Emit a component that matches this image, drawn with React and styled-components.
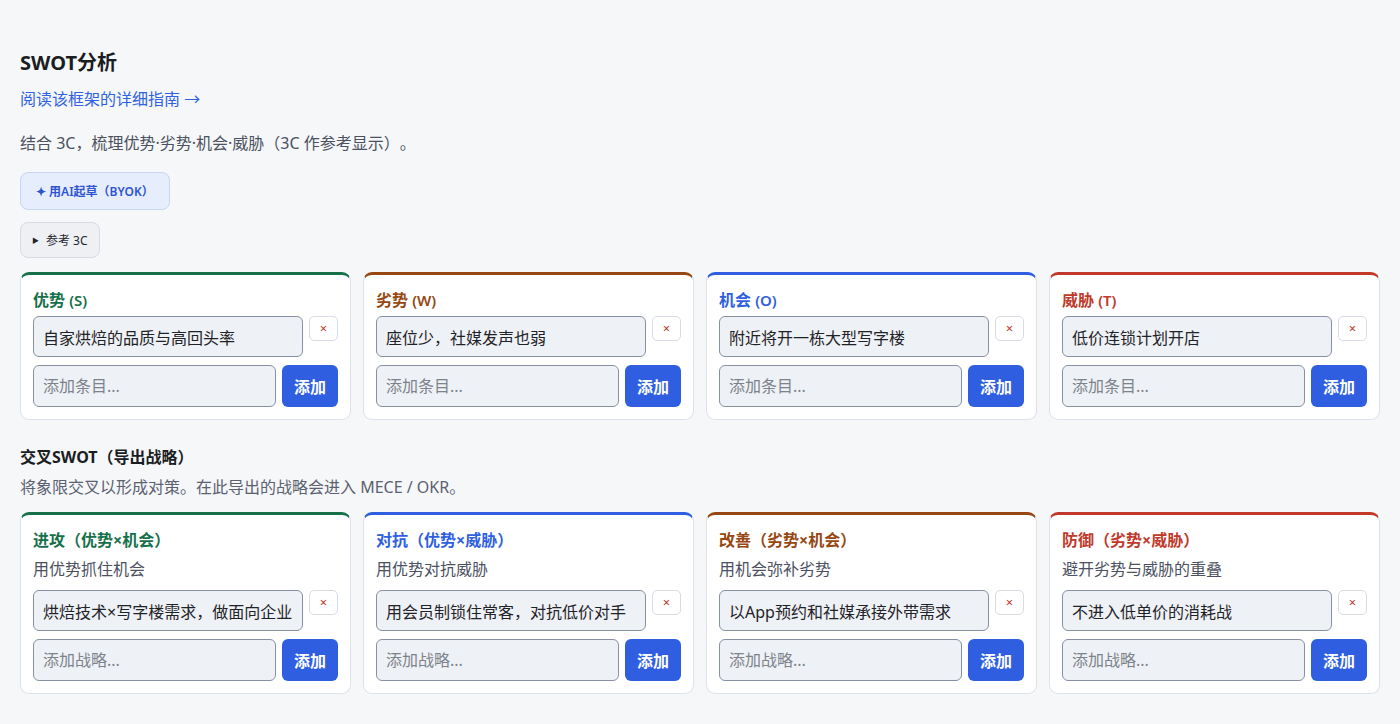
import React from "react";
import styled, { createGlobalStyle } from "styled-components";

const GlobalStyle = createGlobalStyle`
  body {
    margin: 0;
    background: #f6f7f9;
    font-family: "Noto Sans", "Noto Sans CJK SC", sans-serif;
    color: #1f2328;
    text-spacing-trim: space-all;
  }
  * {
    box-sizing: border-box;
  }
`;

const Page = styled.div`
  padding: 49px 20px 30px;
`;

const Title = styled.h2`
  margin: 0;
  font-size: 20px;
  line-height: 28px;
  font-weight: 700;
  color: #1a1d21;
`;

const GuideLink = styled.a`
  display: block;
  margin-top: 11px;
  font-size: 16px;
  line-height: 22px;
  color: #2f62e3;
  text-decoration: none;
`;

const Lead = styled.p`
  margin: 22px 0 0;
  font-size: 16px;
  line-height: 22px;
  color: #4b5160;
`;

const AiButton = styled.button`
  display: block;
  margin-top: 18px;
  height: 38px;
  padding: 0 15px;
  border: 1px solid #c9d5f2;
  border-radius: 8px;
  background: #e6edfd;
  color: #2f54d2;
  font-family: inherit;
  font-size: 12px;
  font-weight: 600;
`;

const RefButton = styled.button`
  display: block;
  margin-top: 12px;
  height: 36px;
  padding: 0 11px;
  border: 1px solid #d6dae2;
  border-radius: 8px;
  background: #eef0f4;
  color: #22262c;
  font-family: inherit;
  font-size: 12px;

  span {
    font-size: 7px;
    margin-right: 7px;
    vertical-align: 2px;
  }
`;

const Grid = styled.div`
  display: grid;
  grid-template-columns: repeat(4, minmax(0, 1fr));
  gap: 12px;
  margin-top: ${(p) => p.$top || 0}px;
`;

const Card = styled.div`
  background: #fff;
  border: 1px solid #dde1e8;
  border-top: 3px solid ${(p) => p.$color};
  border-radius: 9px;
  padding: 14px 12px 12px;
`;

const CardTitle = styled.div`
  font-size: 16px;
  line-height: 22px;
  font-weight: 700;
  color: ${(p) => p.$color};
  margin-bottom: 5px;

  small {
    font-size: 15px;
    font-weight: 600;
  }
`;

const CardHint = styled.div`
  font-size: 16px;
  line-height: 20px;
  color: #4b5160;
  margin: 8px 0 11px;
`;

const Row = styled.div`
  display: flex;
  align-items: flex-start;
  gap: 6px;
  margin-bottom: 8px;

  &:last-child {
    margin-bottom: 0;
  }
`;

const Field = styled.input`
  flex: 1;
  min-width: 0;
  height: ${(p) => p.$h}px;
  padding: 0 9px;
  border: 1px solid #8891a3;
  border-radius: 6px;
  background: #eef1f5;
  font-family: inherit;
  font-size: 16px;
  color: #1f2328;

  &::placeholder {
    color: #7d838c;
  }
`;

const RemoveButton = styled.button`
  flex: none;
  width: 29px;
  height: 25px;
  padding: 0;
  border: 1px solid #d8dce3;
  border-radius: 5px;
  background: #fff;
  color: #c0392b;
  font-family: inherit;
  font-size: 13px;
  line-height: 1;
`;

const AddButton = styled.button`
  flex: none;
  width: 56px;
  height: 42px;
  border: none;
  border-radius: 6px;
  background: #2f5fe0;
  color: #fff;
  font-family: inherit;
  font-size: 16px;
  font-weight: 700;
`;

const SectionTitle = styled.h3`
  margin: 26px 0 0;
  font-size: 16px;
  line-height: 22px;
  font-weight: 700;
  color: #1a1d21;
`;

const SectionNote = styled.p`
  margin: 9px 0 0;
  font-size: 16px;
  line-height: 20px;
  color: #5b6170;
`;

const GREEN = "#17704a";
const BROWN = "#964712";
const BLUE = "#2f5fe0";
const RED = "#c0392b";

const swot = [
  { name: "优势", code: "(S)", color: GREEN, items: ["自家烘焙的品质与高回头率"] },
  { name: "劣势", code: "(W)", color: BROWN, items: ["座位少，社媒发声也弱"] },
  { name: "机会", code: "(O)", color: BLUE, items: ["附近将开一栋大型写字楼"] },
  { name: "威胁", code: "(T)", color: RED, items: ["低价连锁计划开店"] },
];

const cross = [
  {
    name: "进攻（优势×机会）",
    hint: "用优势抓住机会",
    color: GREEN,
    items: ["烘焙技术×写字楼需求，做面向企业的早餐配送"],
  },
  {
    name: "对抗（优势×威胁）",
    hint: "用优势对抗威胁",
    color: BLUE,
    items: ["用会员制锁住常客，对抗低价对手"],
  },
  {
    name: "改善（劣势×机会）",
    hint: "用机会弥补劣势",
    color: BROWN,
    items: ["以App预约和社媒承接外带需求"],
  },
  {
    name: "防御（劣势×威胁）",
    hint: "避开劣势与威胁的重叠",
    color: RED,
    items: ["不进入低单价的消耗战"],
  },
];

function ItemList({ items, placeholder }) {
  return (
    <>
      {items.map((item, index) => (
        <Row key={index}>
          <Field $h={41} defaultValue={item} />
          <RemoveButton title="删除">×</RemoveButton>
        </Row>
      ))}
      <Row>
        <Field $h={42} placeholder={placeholder} />
        <AddButton>添加</AddButton>
      </Row>
    </>
  );
}

function App() {
  return (
    <Page>
      <GlobalStyle />
      <Title>SWOT分析</Title>
      <GuideLink href="#">阅读该框架的详细指南 →</GuideLink>
      <Lead>结合 3C，梳理优势·劣势·机会·威胁（3C 作参考显示）。</Lead>
      <AiButton>✦ 用AI起草（BYOK）</AiButton>
      <RefButton>
        <span>▶</span>参考 3C
      </RefButton>

      <Grid $top={14}>
        {swot.map((box) => (
          <Card key={box.code} $color={box.color}>
            <CardTitle $color={box.color}>
              {box.name} <small>{box.code}</small>
            </CardTitle>
            <ItemList items={box.items} placeholder="添加条目..." />
          </Card>
        ))}
      </Grid>

      <SectionTitle>交叉SWOT（导出战略）</SectionTitle>
      <SectionNote>将象限交叉以形成对策。在此导出的战略会进入 MECE / OKR。</SectionNote>

      <Grid $top={15}>
        {cross.map((box) => (
          <Card key={box.name} $color={box.color}>
            <CardTitle $color={box.color}>{box.name}</CardTitle>
            <CardHint>{box.hint}</CardHint>
            <ItemList items={box.items} placeholder="添加战略..." />
          </Card>
        ))}
      </Grid>
    </Page>
  );
}

export default App;
